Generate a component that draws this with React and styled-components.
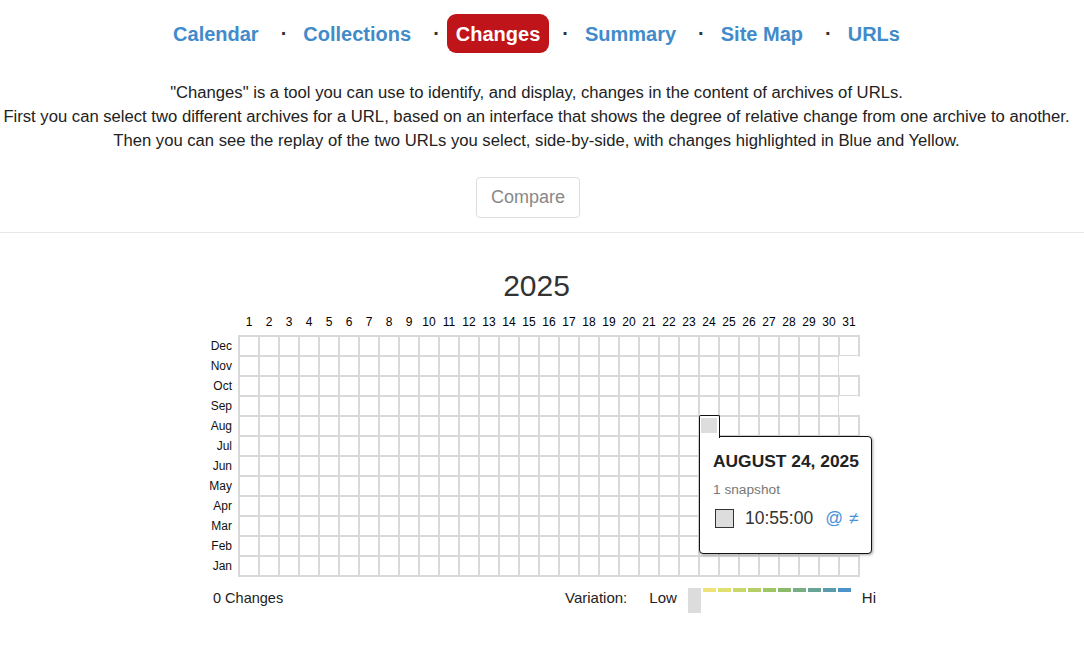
import React from "react";
import styled, { createGlobalStyle } from "styled-components";

const GlobalStyle = createGlobalStyle`
  body {
    margin: 0;
    background: #fff;
    font-family: "Liberation Sans", Arial, Helvetica, sans-serif;
    color: #222;
  }
`;

const Page = styled.div`
  padding-right: 11px;
`;

const Nav = styled.nav`
  display: flex;
  justify-content: center;
  align-items: center;
  padding-top: 14px;
`;

const NavItem = styled.a`
  display: block;
  height: 39px;
  line-height: 40px;
  padding: 0 9px;
  border-radius: 9px;
  font-size: 20px;
  font-weight: bold;
  text-decoration: none;
  color: ${p => (p.$active ? "#fff" : "#428bca")};
  background: ${p => (p.$active ? "#bf141a" : "transparent")};
`;

const Dot = styled.span`
  font-size: 20px;
  font-weight: bold;
  color: #333;
  margin: 0 7px 0 13px;
`;

const Intro = styled.p`
  margin: 28px 0 0;
  font-size: 16.65px;
  line-height: 24px;
  text-align: center;
  color: #222;
`;

const CompareRow = styled.div`
  display: flex;
  justify-content: center;
  margin-top: 24px;
`;

const CompareButton = styled.button`
  font-family: inherit;
  font-size: 18px;
  line-height: 21px;
  height: 41px;
  padding: 0 14px;
  margin-right: 17px;
  color: #888;
  background: #fff;
  border: 1px solid #ddd;
  border-radius: 4px;
`;

const Divider = styled.hr`
  margin: 14px -11px 0 0;
  border: 0;
  border-top: 1px solid #e8e8e8;
`;

const Calendar = styled.section`
  width: 681px;
  margin: 0 auto;
`;

const Year = styled.h1`
  margin: 36px 0 0;
  font-size: 30px;
  line-height: 34px;
  font-weight: normal;
  text-align: center;
  color: #333;
`;

const DayHeader = styled.div`
  display: grid;
  grid-template-columns: repeat(31, 20px);
  margin: 12px 0 0 43px;
  height: 21px;
`;

const DayNum = styled.span`
  font-size: 12px;
  line-height: 14px;
  text-align: center;
  color: #000;
`;

const Body = styled.div`
  display: flex;
`;

const Months = styled.div`
  width: 36px;
  margin-right: 7px;
  display: flex;
  flex-direction: column;
`;

const MonthLabel = styled.div`
  height: 20px;
  line-height: 21px;
  font-size: 12px;
  text-align: right;
  color: #111;
`;

const Grid = styled.div`
  position: relative;
  display: grid;
  grid-template-columns: repeat(31, 20px);
  grid-auto-rows: 20px;
`;

const Cell = styled.div`
  outline: ${p => (p.$empty ? "none" : "2px solid #d9d9d9")};
  outline-offset: -1px;
  background: #fff;
`;

const HoverTab = styled.div`
  position: absolute;
  left: 460px;
  top: 79px;
  width: 19px;
  height: 22px;
  background: #fff;
  border: 1px solid #111;
  border-bottom: 0;
  border-radius: 2px 2px 0 0;
  z-index: 3;
  &::after {
    content: "";
    position: absolute;
    left: 1px;
    top: 2px;
    width: 16px;
    height: 15px;
    background: #ddd;
  }
`;

const Tooltip = styled.div`
  position: absolute;
  left: 460px;
  top: 100px;
  width: 171px;
  height: 116px;
  background: #fff;
  border: 1px solid #111;
  border-radius: 0 4px 4px 4px;
  box-shadow: 1px 1px 3px rgba(0, 0, 0, 0.35);
  z-index: 2;
`;

const TipInner = styled.div`
  padding: 14px 0 0 13px;
`;

const TipDate = styled.div`
  font-size: 17.4px;
  line-height: 20px;
  font-weight: bold;
  color: #222;
`;

const TipCount = styled.div`
  margin-top: 11px;
  font-size: 13.7px;
  line-height: 16px;
  color: #777;
`;

const SnapRow = styled.div`
  display: flex;
  align-items: center;
  margin-top: 10px;
  padding-left: 2px;
`;

const SnapBox = styled.span`
  width: 17px;
  height: 17px;
  background: #ddd;
  border: 1px solid #333;
`;

const SnapTime = styled.span`
  margin-left: 11px;
  font-size: 17.5px;
  color: #333;
`;

const SnapLink = styled.span`
  margin-left: ${p => p.$gap}px;
  font-size: 17.5px;
  color: #4a90d9;
`;

const Footer = styled.div`
  display: flex;
  align-items: flex-start;
  margin-top: 12px;
`;

const Count = styled.div`
  padding-left: 17px;
  font-size: 14.5px;
  line-height: 20px;
  color: #222;
`;

const Legend = styled.div`
  margin-left: auto;
  margin-right: 1px;
  display: flex;
  align-items: flex-start;
  font-size: 15px;
  line-height: 20px;
  color: #222;
`;

const LegendLabel = styled.span`
  margin-right: ${p => p.$gap}px;
`;

const LowBar = styled.span`
  width: 13px;
  height: 25px;
  background: #dcdcdc;
  margin-right: 2px;
`;

const Swatches = styled.div`
  display: flex;
  gap: 2px;
  margin-right: 11px;
`;

const Swatch = styled.span`
  width: 13px;
  height: 4px;
  background: ${p => p.$color};
`;

const navItems = ["Calendar", "Collections", "Changes", "Summary", "Site Map", "URLs"];
const months = ["Dec", "Nov", "Oct", "Sep", "Aug", "Jul", "Jun", "May", "Apr", "Mar", "Feb", "Jan"];
const monthLength = { Jan: 31, Feb: 28, Mar: 31, Apr: 30, May: 31, Jun: 30, Jul: 31, Aug: 31, Sep: 30, Oct: 31, Nov: 30, Dec: 31 };
const scale = ["#eee377", "#dee070", "#c9d86b", "#b5cf68", "#a0c565", "#8abb6d", "#77ae83", "#69a596", "#5a9bae", "#4b93c8"];
const days = Array.from({ length: 31 }, (_, i) => i + 1);

export default function App() {
  return (
    <Page>
      <GlobalStyle />
      <Nav>
        {navItems.map((item, i) => (
          <React.Fragment key={item}>
            {i > 0 && <Dot>·</Dot>}
            <NavItem href="#" $active={item === "Changes"}>
              {item}
            </NavItem>
          </React.Fragment>
        ))}
      </Nav>
      <Intro>
        "Changes" is a tool you can use to identify, and display, changes in the content of archives of URLs.
        <br />
        First you can select two different archives for a URL, based on an interface that shows the degree of relative change from one archive to another.
        <br />
        Then you can see the replay of the two URLs you select, side-by-side, with changes highlighted in Blue and Yellow.
      </Intro>
      <CompareRow>
        <CompareButton>Compare</CompareButton>
      </CompareRow>
      <Divider />
      <Calendar>
        <Year>2025</Year>
        <DayHeader>
          {days.map(d => (
            <DayNum key={d}>{d}</DayNum>
          ))}
        </DayHeader>
        <Body>
          <Months>
            {months.map(m => (
              <MonthLabel key={m}>{m}</MonthLabel>
            ))}
          </Months>
          <Grid>
            {months.map(m =>
              days.map(d => <Cell key={m + d} $empty={d > monthLength[m]} />)
            )}
            <HoverTab />
            <Tooltip>
              <TipInner>
                <TipDate>AUGUST 24, 2025</TipDate>
                <TipCount>1 snapshot</TipCount>
                <SnapRow>
                  <SnapBox />
                  <SnapTime>10:55:00</SnapTime>
                  <SnapLink $gap={12}>@</SnapLink>
                  <SnapLink $gap={6}>≠</SnapLink>
                </SnapRow>
              </TipInner>
            </Tooltip>
          </Grid>
        </Body>
        <Footer>
          <Count>0 Changes</Count>
          <Legend>
            <LegendLabel $gap={22}>Variation:</LegendLabel>
            <LegendLabel $gap={11}>Low</LegendLabel>
            <LowBar />
            <Swatches>
              {scale.map(c => (
                <Swatch key={c} $color={c} />
              ))}
            </Swatches>
            <span>Hi</span>
          </Legend>
        </Footer>
      </Calendar>
    </Page>
  );
}
